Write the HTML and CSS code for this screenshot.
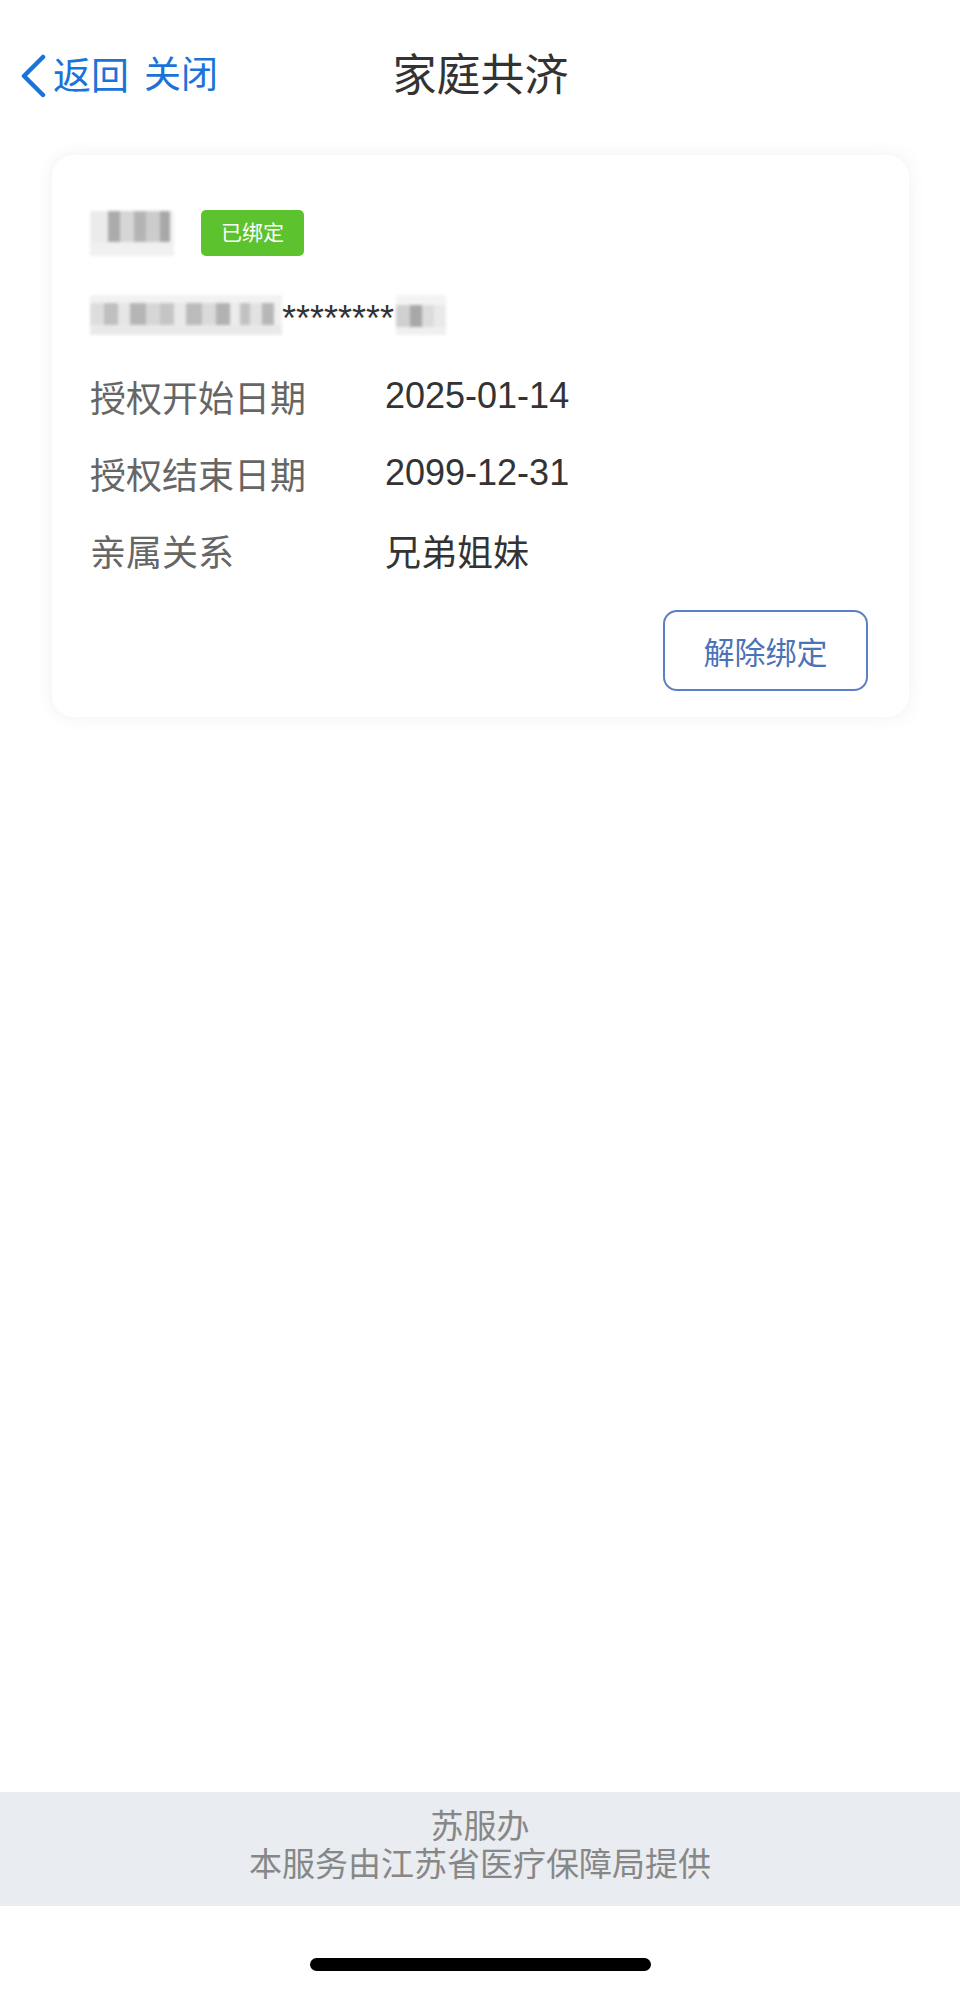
FILE: index.html
```html
<!DOCTYPE html>
<html lang="zh-CN">
<head>
<meta charset="utf-8">
<title>家庭共济</title>
<link rel="stylesheet" href="styles.css">
</head>
<body>
<div class="page">
  <header class="nav">
    <div class="nav-left">
      <svg class="chevron" width="28" height="44" viewBox="0 0 28 44"><polyline points="24,3 5,22 24,41" fill="none" stroke="#1a73d9" stroke-width="4.5" stroke-linecap="round" stroke-linejoin="round"/></svg>
      <span class="nav-link">返回</span>
      <span class="nav-link close">关闭</span>
    </div>
    <h1 class="nav-title">家庭共济</h1>
    <div class="nav-right"></div>
  </header>

  <main class="content">
    <section class="card">
      <div class="name-row">
        <div class="blur blur-name"></div>
        <span class="badge">已绑定</span>
      </div>
      <div class="id-row">
        <div class="blur blur-id"></div>
        <span class="stars">********</span>
        <div class="blur blur-tail"></div>
      </div>
      <dl class="info">
        <div class="info-row"><dt>授权开始日期</dt><dd>2025-01-14</dd></div>
        <div class="info-row"><dt>授权结束日期</dt><dd>2099-12-31</dd></div>
        <div class="info-row"><dt>亲属关系</dt><dd>兄弟姐妹</dd></div>
      </dl>
      <div class="actions">
        <button class="unbind">解除绑定</button>
      </div>
    </section>
  </main>

  <footer class="footer">
    <div class="footer-line">苏服办</div>
    <div class="footer-line">本服务由江苏省医疗保障局提供</div>
  </footer>
  <div class="home-area"><div class="home-indicator"></div></div>
</div>
</body>
</html>
```

FILE: styles.css
```css
* { box-sizing: border-box; }
html, body { margin: 0; padding: 0; background: #fff; }
body {
  font-family: "Liberation Sans", "Noto Sans CJK SC", sans-serif;
  color: #333;
}
.page {
  height: 1991px;
  display: flex;
  flex-direction: column;
}
.nav {
  height: 152px;
  flex: none;
  display: grid;
  grid-template-columns: 1fr auto 1fr;
  align-items: center;
  padding: 0 18px 0 19px;
}
.nav-left {
  display: flex;
  align-items: center;
}
.chevron { display: block; margin-right: 6px; }
.nav-link {
  font-size: 38px;
  line-height: 44px;
  color: #1a73d9;
}
.nav-link.close { margin-left: 15px; font-size: 37px; }
.nav-title {
  margin: 0;
  font-size: 44px;
  line-height: 52px;
  font-weight: normal;
  color: #333;
}
.content {
  flex: 1;
  padding: 3px 51px 0 52px;
}
.card {
  background: #fff;
  border-radius: 22px;
  box-shadow: 0 0 18px rgba(30, 60, 110, 0.08);
  padding: 55px 41px 26px 38px;
}
.name-row {
  display: flex;
  align-items: center;
  height: 46px;
}
.blur {
  filter: blur(1.5px);
  opacity: 0.85;
}
.blur-name {
  width: 84px;
  height: 45px;
  background:
    linear-gradient(180deg, transparent 0 70%, #eee 70% 100%),
    linear-gradient(90deg, #e8e8e8 0 18px, #9d9d9d 18px 30px, #cfcfcf 30px 44px, #a8a8a8 44px 56px, #c4c4c4 56px 70px, #999 70px 80px, #eee 80px);
}
.badge {
  margin-left: 27px;
  width: 103px;
  height: 46px;
  border-radius: 5px;
  background: #5cc22d;
  color: #fff;
  font-size: 21px;
  line-height: 46px;
  text-align: center;
}
.id-row {
  display: flex;
  align-items: center;
  height: 40px;
  margin-top: 39px;
}
.blur-id {
  width: 192px;
  height: 40px;
  background:
    linear-gradient(180deg, #f0f0f0 0 20%, transparent 20% 75%, #e6e6e6 75%),
    linear-gradient(90deg, #d8d8d8 0 14px, #b4b4b4 14px 28px, #e2e2e2 28px 40px, #a9a9a9 40px 56px, #d0d0d0 56px 70px, #bcbcbc 70px 84px, #e6e6e6 84px 96px, #b0b0b0 96px 112px, #d4d4d4 112px 126px, #a5a5a5 126px 140px, #e9e9e9 140px 150px, #b8b8b8 150px 160px, #dddddd 160px 172px, #ababab 172px 184px, #eee 184px);
}
.stars {
  font-size: 36px;
  line-height: 40px;
  color: #333;
  padding-top: 8px;
}
.blur-tail {
  width: 50px;
  height: 40px;
  margin-left: 2px;
  background:
    linear-gradient(180deg, #f2f2f2 0 25%, transparent 25% 80%, #eee 80%),
    linear-gradient(90deg, #c8c8c8 0 14px, #999 14px 26px, #d6d6d6 26px 38px, #e6e6e6 38px);
}
.info {
  margin: 22px 0 0;
}
.info-row {
  display: flex;
  height: 77px;
  align-items: center;
}
.info-row dt {
  width: 295px;
  font-size: 36px;
  color: #666;
}
.info-row dd {
  margin: 0;
  font-size: 36px;
  color: #333;
}
.actions {
  display: flex;
  justify-content: flex-end;
  margin-top: 22px;
}
.unbind {
  width: 205px;
  height: 81px;
  border: 2px solid #5b80c6;
  border-radius: 14px;
  background: #fff;
  color: #4c72b8;
  font-family: "Liberation Sans", "Noto Sans CJK SC", sans-serif;
  font-size: 31px;
  padding: 0;
}
.footer {
  flex: none;
  height: 114px;
  background: #e9ecf0;
  padding-top: 16px;
  text-align: center;
  color: #878787;
}
.footer-line {
  font-size: 33px;
  line-height: 38px;
}
.home-area {
  flex: none;
  height: 85px;
  display: flex;
  justify-content: center;
  padding-top: 52px;
}
.home-indicator {
  width: 341px;
  height: 13px;
  border-radius: 7px;
  background: #000;
}
```
